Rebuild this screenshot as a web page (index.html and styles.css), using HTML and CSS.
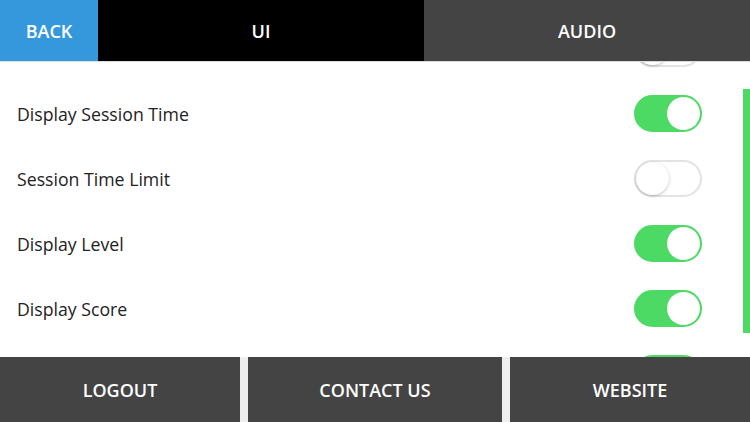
FILE: index.html
```html
<!DOCTYPE html>
<html lang="en">
<head>
    <meta charset="UTF-8">
    <meta name="viewport" content="width=device-width, initial-scale=1.0">
    <title>Settings</title>
    <link rel="stylesheet" href="styles.css">
</head>
<body>
    <div class="app">
        <div class="tabs">
            <div class="tab back">BACK</div>
            <div class="tab active">UI</div>
            <div class="tab">AUDIO</div>
        </div>

        <div class="content">
            <div class="list">
                <div class="row"><span></span><div class="toggle"></div></div>
                <div class="row"><span>Display Session Time</span><div class="toggle on"></div></div>
                <div class="row"><span>Session Time Limit</span><div class="toggle"></div></div>
                <div class="row"><span>Display Level</span><div class="toggle on"></div></div>
                <div class="row"><span>Display Score</span><div class="toggle on"></div></div>
                <div class="row"><span></span><div class="toggle on"></div></div>
            </div>
            <div class="scrollbar"></div>
        </div>

        <div class="footer">
            <div class="btn">LOGOUT</div>
            <div class="btn">CONTACT US</div>
            <div class="btn">WEBSITE</div>
        </div>
    </div>
</body>
</html>
```

FILE: styles.css
```css
body {
    margin: 0;
    font-family: "Open Sans", "Noto Sans", sans-serif;
    background-color: #fff;
}
.app {
    width: 750px;
    height: 422px;
    display: flex;
    flex-direction: column;
    overflow: hidden;
}
.tabs {
    display: grid;
    grid-template-columns: 98px 1fr 1fr;
    height: 61px;
    border-bottom: 1px solid #dcdcdc;
    flex-shrink: 0;
}
.tab, .btn {
    display: flex;
    align-items: center;
    justify-content: center;
    color: #fff;
    font-size: 18px;
    font-weight: 600;
}
.tab {
    background-color: #444;
}
.tab.back {
    background-color: #3598dc;
}
.tab.active {
    background-color: #000;
}
.content {
    flex: 1;
    position: relative;
    overflow: hidden;
}
.list {
    margin-top: -46px;
}
.row {
    height: 65px;
    display: flex;
    align-items: center;
    justify-content: space-between;
    padding: 0 48px 0 17px;
    font-size: 17.7px;
    color: #222;
}
.toggle {
    width: 68px;
    height: 37px;
    box-sizing: border-box;
    border-radius: 19px;
    border: 2px solid #e3e3e3;
    background-color: #fff;
    position: relative;
}
.toggle::after {
    content: "";
    position: absolute;
    top: 0;
    left: 0;
    width: 33px;
    height: 33px;
    border-radius: 50%;
    background-color: #fff;
    box-shadow: 0 1px 3px rgba(0, 0, 0, 0.25);
}
.toggle.on {
    background-color: #4cd964;
    border-color: #4cd964;
}
.toggle.on::after {
    left: auto;
    right: 0;
    box-shadow: none;
}
.scrollbar {
    position: absolute;
    right: 0;
    top: 27px;
    width: 7px;
    height: 244px;
    background-color: #4cd964;
}
.footer {
    display: grid;
    grid-template-columns: 240px 1fr 240px;
    gap: 8px;
    height: 65px;
    background-color: #eeeeee;
    flex-shrink: 0;
}
.btn {
    background-color: #444;
}
```
